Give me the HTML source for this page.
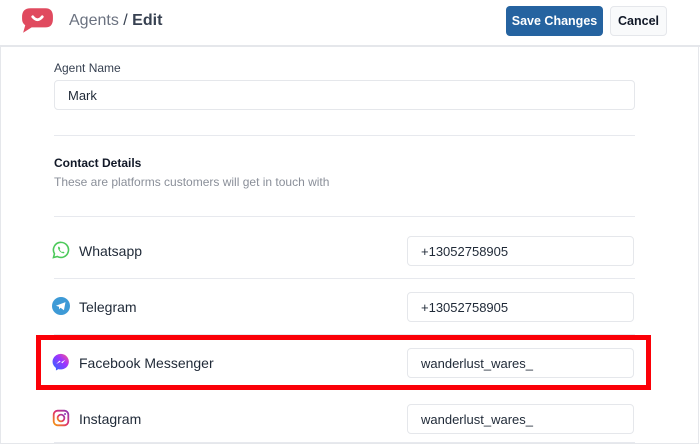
<!DOCTYPE html>
<html><head><style>
*{box-sizing:border-box;margin:0;padding:0}
body{width:700px;height:444px;overflow:hidden;background:#fff;font-family:"Liberation Sans",sans-serif;position:relative;color:#1f2937}
.frame{position:absolute;left:0;top:0;width:699px;height:444px;border:1px solid #e5e7eb;border-top:none}
.hdr{position:absolute;left:0;top:0;width:700px;height:47px;border-bottom:2px solid #e5e7eb;background:#fff}
.a{position:absolute}
.t{position:absolute;white-space:nowrap}
.inp{position:absolute;border:1px solid #e5e7eb;border-radius:4px;background:#fff;font-size:13px;color:#1f2937;padding-left:13px;display:flex;align-items:center}
.line{position:absolute;left:54px;width:581px;height:1px;background:#e7e9ee}
.lbl{position:absolute;left:79px;font-size:14px;color:#1f2937}
</style></head><body>
<div class="frame"></div>
<div class="hdr"></div>
<svg class="a" style="left:21px;top:7px" width="33" height="27" viewBox="0 0 31 25"><path d="M9 1H23Q30 1 30 9V11Q30 19 23 19H10L2 24L4 17Q1 15 1 11V9Q1 1 9 1Z" fill="#e04a5f"/><path d="M11 9Q15.5 14.5 20 9" stroke="#fff" stroke-width="2.6" fill="none" stroke-linecap="round"/></svg>
<div class="t" style="left:69px;top:12px;font-size:16px;color:#6b7280">Agents <span style="color:#374151">/</span> <b style="color:#374151">Edit</b></div>
<div class="a" style="left:506px;top:6px;width:97px;height:30px;background:#2563a0;border-radius:4px;color:#fff;font-size:12.5px;font-weight:bold;display:flex;align-items:center;justify-content:center">Save Changes</div>
<div class="a" style="left:610px;top:6px;width:57px;height:30px;background:#f9fafb;border:1px solid #e5e7eb;border-radius:4px;color:#111827;font-size:12.5px;font-weight:bold;display:flex;align-items:center;justify-content:center">Cancel</div>
<div class="t" style="left:54px;top:61px;font-size:12px;color:#374151">Agent Name</div>
<div class="inp" style="left:54px;top:80px;width:581px;height:30px">Mark</div>
<div class="line" style="top:135px"></div>
<div class="t" style="left:54px;top:156px;font-size:12px;font-weight:bold;color:#111827">Contact Details</div>
<div class="t" style="left:54px;top:175px;font-size:12px;color:#8a8f99">These are platforms customers will get in touch with</div>
<div class="line" style="top:216px"></div>
<div class="line" style="top:278px"></div>
<div class="line" style="top:334px"></div>
<div class="line" style="top:442px"></div>
<svg class="a" style="left:52px;top:241px" width="18" height="18" viewBox="0 0 16 16"><path d="M8 1.2A6.7 6.7 0 0 0 2.2 11.3L1.3 14.7L4.8 13.8A6.7 6.7 0 1 0 8 1.2Z" fill="none" stroke="#4cc95a" stroke-width="1.4"/><path d="M5.6 5Q5 6 6 8Q7.5 10.5 10.3 11Q11.2 10.8 11 10L9.7 9.3L9 10Q7.4 9.2 6.8 7.4L7.3 6.7L6.6 5.2Z" fill="#4cc95a"/></svg>
<div class="lbl" style="top:243px">Whatsapp</div>
<svg class="a" style="left:52px;top:297px" width="18" height="18" viewBox="0 0 16 16"><circle cx="8" cy="8" r="8" fill="#3d9ad6"/><path d="M3.5 7.8L12 4.5L10.6 11.8L7.6 9.6L6.3 11L6.2 8.7Z" fill="#fff"/></svg>
<div class="lbl" style="top:299px">Telegram</div>
<svg class="a" style="left:52px;top:353px" width="18" height="18" viewBox="0 0 16 16"><defs><linearGradient id="g" x1="0" y1="1" x2="1" y2="0"><stop offset="0" stop-color="#1f6bff"/><stop offset=".6" stop-color="#a033ff"/><stop offset="1" stop-color="#ff5c87"/></linearGradient></defs><path d="M8 .8A7.2 6.9 0 0 0 3.5 13.3V15.6L5.7 14.3A7.2 6.9 0 1 0 8 .8Z" fill="url(#g)"/><path d="M3.8 9.8L6.6 6.8L8.2 8.2L11.9 6L9.2 9.1L7.6 7.7Z" fill="#fff"/></svg>
<div class="lbl" style="top:355px">Facebook Messenger</div>
<svg class="a" style="left:52px;top:409px" width="18" height="18" viewBox="0 0 16 16"><defs><linearGradient id="h" x1="0" y1="1" x2="1" y2="0"><stop offset="0" stop-color="#f59e0b"/><stop offset=".5" stop-color="#e1306c"/><stop offset="1" stop-color="#8b3ab8"/></linearGradient></defs><rect x="1.5" y="1.5" width="13" height="13" rx="3.5" fill="none" stroke="url(#h)" stroke-width="1.6"/><circle cx="8" cy="8" r="3" fill="none" stroke="url(#h)" stroke-width="1.6"/><circle cx="11.6" cy="4.4" r=".9" fill="#8b3ab8"/></svg>
<div class="lbl" style="top:411px">Instagram</div>
<div class="inp" style="left:407px;top:236px;width:227px;height:30px">+13052758905</div>
<div class="inp" style="left:407px;top:292px;width:227px;height:30px">+13052758905</div>
<div class="inp" style="left:407px;top:348px;width:227px;height:30px">wanderlust_wares_</div>
<div class="inp" style="left:407px;top:404px;width:227px;height:30px">wanderlust_wares_</div>
<div class="a" style="left:36px;top:335px;width:615px;height:55px;border:5px solid #fb0007"></div>
</body></html>
